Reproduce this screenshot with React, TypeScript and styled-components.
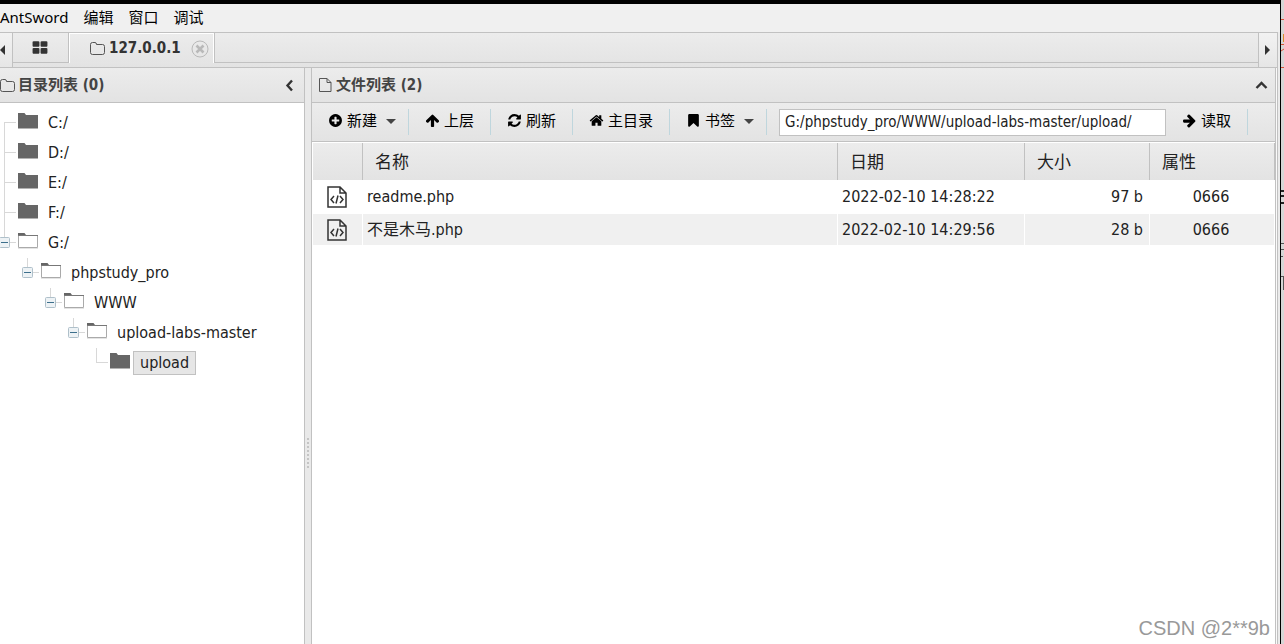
import React from "react";
import styled, { createGlobalStyle, css } from "styled-components";

const line = "#c1c1c1";
const shade = "linear-gradient(#ececec, #e3e3e3)";
const narrow = '"DejaVu Sans Condensed", "Noto Sans CJK SC", sans-serif';
const wide = '"Noto Sans", "Noto Sans CJK SC", sans-serif';

const GlobalStyle = createGlobalStyle`
  *, *::before, *::after { box-sizing: border-box; }
  html, body, #root { height: 100%; }
  body { margin: 0; overflow: hidden; background: #d6d6d6; color: #222; font-family: ${narrow}; font-size: 15px; }
  button, input { font: inherit; color: inherit; }
  button { margin: 0; padding: 0; border: 0; background: none; }
`;

const Desktop = styled.div`
  display: flex;
  height: 100vh;
`;

const AppWindow = styled.div`
  position: relative;
  display: flex;
  flex-direction: column;
  flex: 1;
  min-width: 0;
  background: #ebebeb;
  border-top: 4px solid #000;
  border-right: 1px solid #000;
`;

const Behind = styled.svg`
  flex: none;
  width: 3px;
  height: 100%;
`;

const MenuBar = styled.nav`
  display: flex;
  align-items: center;
  gap: 15px;
  height: 28px;
  padding-bottom: 2px;
  color: #000;
  background: #f0f0f0;
`;

const MenuItem = styled.button`
  font-family: ${wide};
  line-height: 20px;
`;

const TabBar = styled.div`
  display: flex;
  height: 36px;
  margin-right: 2px;
  border: solid ${line};
  border-width: 1px 1px 1px 0;
  background: ${shade};
`;

const Scroller = styled.button<{ $side: "left" | "right" }>`
  display: flex;
  align-items: center;
  justify-content: ${(p) => (p.$side === "left" ? "flex-start" : "center")};
  width: ${(p) => (p.$side === "left" ? 13 : 19)}px;
  background: linear-gradient(#f2f2f2, #e6e6e6);
  ${(p) => (p.$side === "left" ? "border-right" : "border-left")}: 1px solid ${line};
`;

const HomeTab = styled.button`
  display: flex;
  align-items: center;
  justify-content: center;
  width: 56px;
  height: 30px;
  padding-right: 2px;
  color: #333;
  border: solid ${line};
  border-width: 0 1px 1px 0;
`;

const ActiveTab = styled.div`
  display: flex;
  align-items: center;
  width: 145px;
  height: 30px;
  padding-left: 20px;
  color: #333;
  border: solid #fff;
  border-width: 1px 1px 0 1px;
`;

const TabTitle = styled.button`
  display: flex;
  align-items: center;
  gap: 4px;
  padding-bottom: 1px;
  font-weight: 700;
`;

const TabClose = styled.button`
  display: flex;
  margin-left: 10px;
`;

const TabRest = styled.div`
  flex: 1;
  height: 30px;
  border: solid ${line};
  border-width: 0 0 1px 1px;
`;

const Workspace = styled.main`
  display: flex;
  flex: 1;
  min-height: 0;
  margin-right: 2px;
  background: #fafafa;
  border-right: 1px solid ${line};
`;

const Panel = styled.section<{ $side?: boolean }>`
  display: flex;
  flex-direction: column;
  background: #fff;
  overflow: hidden;
  border-right: 1px solid ${line};
  ${(p) =>
    p.$side
      ? css`width: 305px; flex: none;`
      : css`flex: 1; min-width: 0; margin-right: 1px; border-left: 1px solid ${line};`}
`;

const PanelHeader = styled.header<{ $inset?: boolean }>`
  display: flex;
  align-items: center;
  gap: 3px;
  height: 35px;
  flex: none;
  padding: 0 7px 0 ${(p) => (p.$inset ? 6 : 0)}px;
  color: #444;
  background: ${shade};
  border-bottom: 1px solid ${line};
`;

const PanelTitle = styled.h2`
  flex: 1;
  margin: 0;
  padding-bottom: 1px;
  font: 700 15px/20px ${narrow};
`;

const IconButton = styled.button`
  display: flex;
  color: #333;
`;

const Splitter = styled.div`
  display: flex;
  align-items: center;
  justify-content: center;
  width: 6px;
  flex: none;
  padding-top: 194px;
  background: #e9e9e9;
`;

const Grip = styled.div`
  width: 2px;
  height: 30px;
  background: repeating-linear-gradient(#c4c4c4 0 2px, #e9e9e9 2px 4px);
`;

const Tree = styled.ul`
  margin: 5px 0 0 -5px;
  padding: 0;
  list-style: none;
  font-size: 16px;
`;

const TreeRow = styled.li<{ $level: number }>`
  display: flex;
  height: 30px;
  padding-left: ${(p) => p.$level * 23}px;
`;

const NodeIcon = styled.svg`
  width: 20px;
  height: 18px;
  margin-top: 4px;
`;

const NodeLabel = styled.button<{ $selected?: boolean }>`
  height: 24px;
  margin: 3px 0 0 3px;
  padding: 0 6px;
  line-height: 22px;
  border: 1px solid ${(p) => (p.$selected ? line : "transparent")};
  background: ${(p) => (p.$selected ? "#e6e6e6" : "none")};
`;

const Toolbar = styled.div`
  display: flex;
  align-items: center;
  height: 39px;
  flex: none;
  background: ${shade};
  border-bottom: 1px solid ${line};
`;

const Tool = styled.button`
  display: flex;
  align-items: center;
  gap: 4px;
  height: 26px;
  padding: 0 16px 4px;
  font-family: ${wide};
  line-height: 20px;
  white-space: nowrap;
  color: #000;
  border-right: 1px solid #bfd6dd;
`;

const Caret = styled.span`
  margin: 2px -4px 0 5px;
  border: solid transparent;
  border-width: 5px 5px 0;
  border-top-color: #444;
`;

const PathInput = styled.input`
  flex: 1;
  max-width: 387px;
  min-width: 120px;
  height: 27px;
  margin-left: 12px;
  padding: 0 5px;
  border: 1px solid ${line};
  background: #fff;
  outline: 0;
`;

const FileTable = styled.table`
  width: 100%;
  table-layout: fixed;
  border: solid #fff;
  border-width: 1px 0 0 1px;
  border-collapse: separate;
  border-spacing: 0;
  font-size: 16px;
`;

const HeadCell = styled.th<{ $width?: number }>`
  width: ${(p) => (p.$width ? p.$width + "px" : "auto")};
  height: 37px;
  padding: 0 12px;
  font: 400 17px/24px ${wide};
  text-align: left;
  background: ${shade};
  border-right: 1px solid ${line};
`;

const Cell = styled.td<{ $align?: "right" | "center" }>`
  height: 33px;
  padding: 0 6px 0 4px;
  line-height: 24px;
  text-align: ${(p) => p.$align || "left"};
  border: solid #fff;
  border-width: 1px 1px 1px 0;
  white-space: nowrap;
`;

const FileRow = styled.tr<{ $alt?: boolean }>`
  background: ${(p) => (p.$alt ? "#f0f0f0" : "#fff")};
`;

const FileGlyph = styled.svg`
  display: block;
  margin: 0 auto;
`;

const Watermark = styled.div`
  position: absolute;
  right: 10px;
  bottom: 4px;
  font: 20px/24px "Liberation Sans", sans-serif;
  color: #999;
`;

const glyphs = {
  plus: "M1344 960v-128q0-26-19-45t-45-19h-256v-256q0-26-19-45t-45-19h-128q-26 0-45 19t-19 45v256h-256q-26 0-45 19t-19 45v128q0 26 19 45t45 19h256v256q0 26 19 45t45 19h128q26 0 45-19t19-45v-256h256q26 0 45-19t19-45zm320-64q0 209-103 385.5t-279.5 279.5-385.5 103-385.5-103-279.5-279.5-103-385.5 103-385.5 279.5-279.5 385.5-103 385.5 103 279.5 279.5 103 385.5z",
  up: "M1675 971q0 51-37 90l-75 75q-38 38-91 38-54 0-90-38l-294-293v704q0 52-37.5 84.5t-90.5 32.5h-128q-53 0-90.5-32.5t-37.5-84.5v-704l-294 293q-36 38-90 38t-90-38l-75-75q-38-38-38-90 0-53 38-91l651-651q35-37 90-37 54 0 91 37l651 651q37 39 37 91z",
  right: "M1600 960q0 54-37 91l-651 651q-39 37-91 37-51 0-90-37l-75-75q-38-38-38-91t38-91l293-293h-704q-52 0-84.5-37.5t-32.5-90.5v-128q0-53 32.5-90.5t84.5-37.5h704l-293-294q-38-36-38-90t38-90l75-75q38-38 90-38 53 0 91 38l651 651q37 35 37 90z",
  refresh: "M1639 1056q0 5-1 7-64 268-268 434.5t-478 166.5q-146 0-282.5-55t-243.5-157l-129 129q-19 19-45 19t-45-19-19-45v-448q0-26 19-45t45-19h448q26 0 45 19t19 45-19 45l-137 137q71 66 161 102t187 36q134 0 250-65t186-179q11-17 53-117 8-23 30-23h192q13 0 22.5 9.5t9.5 22.5zm25-800v448q0 26-19 45t-45 19h-448q-26 0-45-19t-19-45 19-45l138-138q-148-137-349-137-134 0-250 65t-186 179q-11 17-53 117-8 23-30 23h-199q-13 0-22.5-9.5t-9.5-22.5v-7q65-268 270-434.5t480-166.5q146 0 284 55.5t245 156.5l130-129q19-19 45-19t45 19 19 45z",
  home: "M1472 992v480q0 26-19 45t-45 19h-384v-384h-256v384h-384q-26 0-45-19t-19-45v-480q0-1 .5-3t.5-3l575-474 575 474q1 2 1 6zm223-69l-62 74q-8 9-21 11h-3q-13 0-21-7l-692-577-692 577q-12 8-24 7-13-2-21-11l-62-74q-8-10-7-23.5t11-21.5l719-599q32-26 76-26t76 26l244 204v-195q0-14 9-23t23-9h192q14 0 23 9t9 23v408l219 182q10 8 11 21.5t-7 23.5z",
  bookmark: "M1420 128q23 0 44 9 33 13 52.5 41t19.5 62v1289q0 34-19.5 62t-52.5 41q-19 8-44 8-48 0-83-32l-441-424-441 424q-36 33-83 33-23 0-44-9-33-13-52.5-41t-19.5-62v-1289q0-34 19.5-62t52.5-41q21-9 44-9h1048z",
  large: "M832 1024v384q0 52-38 90t-90 38h-512q-52 0-90-38t-38-90v-384q0-52 38-90t90-38h512q52 0 90 38t38 90zm0-768v384q0 52-38 90t-90 38h-512q-52 0-90-38t-38-90v-384q0-52 38-90t90-38h512q52 0 90 38t38 90zm896 768v384q0 52-38 90t-90 38h-512q-52 0-90-38t-38-90v-384q0-52 38-90t90-38h512q52 0 90 38t38 90zm0-768v384q0 52-38 90t-90 38h-512q-52 0-90-38t-38-90v-384q0-52 38-90t90-38h512q52 0 90 38t38 90z",
};

const Glyph = ({ name, size = 15 }: { name: keyof typeof glyphs; size?: number }) => (
  <svg width={size} height={size} viewBox="0 0 1792 1792" fill="currentColor" aria-hidden="true">
    <path d={glyphs[name]} />
  </svg>
);

const FolderOutline = () => (
  <svg width="15" height="15" viewBox="0 0 15 15" fill="none" stroke="#555" aria-hidden="true">
    <path d="M.5 3.500q0-2 2-2h2.500q1.500 0 1.500 2h6q2 0 2 2v6q0 2-2 2h-10q-2 0-2-2z" />
  </svg>
);

const FileOutline = () => (
  <svg width="15" height="16" viewBox="0 0 15 16" fill="none" stroke="#555" aria-hidden="true">
    <path d="M1.500 1.500h7.500l4 4v9h-11.500zM9 1.500v4h4" />
  </svg>
);

const Triangle = ({ d }: { d: string }) => (
  <svg width="6" height="10" viewBox="0 0 6 10" fill="#333" aria-hidden="true">
    <path d={d} />
  </svg>
);

type NodeKind = "first" | "middle" | "open" | "leaf";

const trunks: Record<NodeKind, string> = {
  first: "M9.500 14V30",
  middle: "M9.500 0V30",
  open: "M9.500 0V14",
  leaf: "M9.500 0V14",
};

const Connector = ({ kind }: { kind: NodeKind }) => (
  <svg width="23" height="30" viewBox="0 0 23 30" fill="none" aria-hidden="true">
    <path d={trunks[kind]} stroke="#d8d8d8" />
    <path d="M9 14.500H21" stroke="#d8d8d8" />
    {kind === "open" && (
      <>
        <rect x="4.500" y="9.500" width="10" height="10" rx="1" fill="#edf2f5" stroke="#afc0ca" />
        <path d="M6 14.500h7" stroke="#3c6f8c" />
      </>
    )}
  </svg>
);

const Folder = ({ open }: { open: boolean }) => (
  <NodeIcon viewBox="0 0 20 18" aria-hidden="true">
    {open ? (
      <>
        <path d="M0 5V1h6.500l1.500 2v2z" fill="#666" />
        <path d="M.5 3.500h19v12h-19z" fill="#fff" stroke="#aaa" />
        <path d="M0 3.500h20" stroke="#777" />
        <path d="M0 16.500h20" stroke="#e4e4e4" />
      </>
    ) : (
      <path d="M0 1h6.500l1.500 2h12v13.500h-20z" fill="#666" />
    )}
  </NodeIcon>
);

const nodes: { label: string; level: number; kind: NodeKind }[] = [
  { label: "C:/", level: 0, kind: "first" },
  { label: "D:/", level: 0, kind: "middle" },
  { label: "E:/", level: 0, kind: "middle" },
  { label: "F:/", level: 0, kind: "middle" },
  { label: "G:/", level: 0, kind: "open" },
  { label: "phpstudy_pro", level: 1, kind: "open" },
  { label: "WWW", level: 2, kind: "open" },
  { label: "upload-labs-master", level: 3, kind: "open" },
  { label: "upload", level: 4, kind: "leaf" },
];

const files = [
  { name: "readme.php", date: "2022-02-10 14:28:22", size: "97 b", mode: "0666" },
  { name: "不是木马.php", date: "2022-02-10 14:29:56", size: "28 b", mode: "0666" },
];

export default function App() {
  return (
    <Desktop>
      <GlobalStyle />
      <AppWindow>
        <MenuBar>
          {["AntSword", "编辑", "窗口", "调试"].map((item) => (
            <MenuItem key={item}>{item}</MenuItem>
          ))}
        </MenuBar>
        <TabBar>
          <Scroller $side="left" aria-label="Scroll tabs left">
            <Triangle d="M5 0v10L0 5z" />
          </Scroller>
          <HomeTab aria-label="Home">
            <Glyph name="large" size={16} />
          </HomeTab>
          <ActiveTab>
            <TabTitle>
              <FolderOutline />
              127.0.0.1
            </TabTitle>
            <TabClose aria-label="Close tab">
              <svg width="18" height="18" viewBox="0 0 18 18" fill="none" stroke="#b9b9b9" aria-hidden="true">
                <circle cx="9" cy="9" r="8" />
                <path d="M5.500 5.500l7 7M12.500 5.500l-7 7" strokeWidth="2.600" />
              </svg>
            </TabClose>
          </ActiveTab>
          <TabRest />
          <Scroller $side="right" aria-label="Scroll tabs right">
            <Triangle d="M0 0v10l5-5z" />
          </Scroller>
        </TabBar>
        <Workspace>
          <Panel $side>
            <PanelHeader>
              <FolderOutline />
              <PanelTitle>目录列表 (0)</PanelTitle>
              <IconButton aria-label="Collapse folders">
                <svg width="14" height="14" viewBox="0 0 14 14" fill="none" stroke="currentColor" strokeWidth="2.400" aria-hidden="true">
                  <path d="M9 2.500L4.500 7.500l4.500 5" />
                </svg>
              </IconButton>
            </PanelHeader>
            <Tree>
              {nodes.map((n) => (
                <TreeRow key={n.label} $level={n.level}>
                  <Connector kind={n.kind} />
                  <Folder open={n.kind === "open"} />
                  <NodeLabel $selected={n.kind === "leaf"}>{n.label}</NodeLabel>
                </TreeRow>
              ))}
            </Tree>
          </Panel>
          <Splitter>
            <Grip />
          </Splitter>
          <Panel>
            <PanelHeader $inset>
              <FileOutline />
              <PanelTitle>文件列表 (2)</PanelTitle>
              <IconButton aria-label="Collapse files">
                <svg width="14" height="14" viewBox="0 0 14 14" fill="none" stroke="currentColor" strokeWidth="2.400" aria-hidden="true">
                  <path d="M2.500 10l5-5 5 5" />
                </svg>
              </IconButton>
            </PanelHeader>
            <Toolbar>
              <Tool><Glyph name="plus" />新建<Caret /></Tool>
              <Tool><Glyph name="up" />上层</Tool>
              <Tool><Glyph name="refresh" />刷新</Tool>
              <Tool><Glyph name="home" />主目录</Tool>
              <Tool><Glyph name="bookmark" />书签<Caret /></Tool>
              <PathInput aria-label="Path" defaultValue="G:/phpstudy_pro/WWW/upload-labs-master/upload/" />
              <Tool><Glyph name="right" />读取</Tool>
            </Toolbar>
            <FileTable>
              <thead>
                <tr>
                  <HeadCell $width={50} aria-label="Type" />
                  <HeadCell>名称</HeadCell>
                  <HeadCell $width={187}>日期</HeadCell>
                  <HeadCell $width={125}>大小</HeadCell>
                  <HeadCell $width={125}>属性</HeadCell>
                </tr>
              </thead>
              <tbody>
                {files.map((f, i) => (
                  <FileRow key={f.name} $alt={i % 2 === 1}>
                    <Cell>
                      <FileGlyph width="20" height="22" viewBox="0 0 20 22" fill="none" stroke="#333" strokeWidth="1.500" aria-hidden="true">
                        <path d="M1 1h12l6 6v14H1zM13 1v6h6" />
                        <path d="M7 10l-3 3.500 3 3.500M13 10l3 3.500-3 3.500M11 9.500l-2 8" />
                      </FileGlyph>
                    </Cell>
                    <Cell>{f.name}</Cell>
                    <Cell>{f.date}</Cell>
                    <Cell $align="right">{f.size}</Cell>
                    <Cell $align="center">{f.mode}</Cell>
                  </FileRow>
                ))}
              </tbody>
            </FileTable>
          </Panel>
        </Workspace>
        <Watermark>CSDN @2**9b</Watermark>
      </AppWindow>
      <Behind viewBox="0 0 3 644" preserveAspectRatio="none" aria-hidden="true">
        <path d="M0 19.500h3M0 44.500h3M0 67.500h3" stroke="#d9533a" />
        <path d="M2 34h1v8h-1z" fill="#d98a2b" />
        <path d="M0 51l3-2" stroke="#d9533a" />
        <path d="M0 191h3M0 196h3M0 203h3" stroke="#222" strokeWidth="2" />
        <path d="M0 243.500h3M0 249.500h3M0 256.500h2M0 276.500h3M2.500 277v13" stroke="#555" />
      </Behind>
    </Desktop>
  );
}
